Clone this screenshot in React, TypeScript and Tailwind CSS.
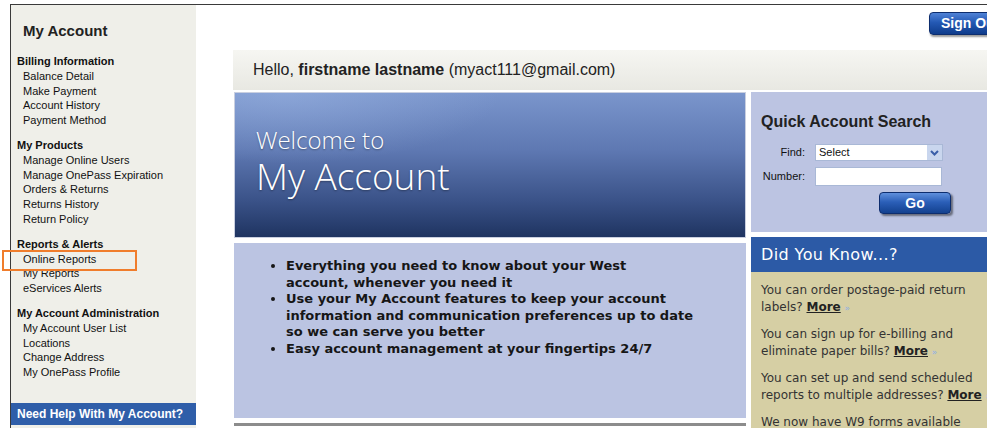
import React from "react";

const sections: { title: string; items: string[] }[] = [
  {
    title: "Billing Information",
    items: ["Balance Detail", "Make Payment", "Account History", "Payment Method"],
  },
  {
    title: "My Products",
    items: [
      "Manage Online Users",
      "Manage OnePass Expiration",
      "Orders & Returns",
      "Returns History",
      "Return Policy",
    ],
  },
  {
    title: "Reports & Alerts",
    items: ["Online Reports", "My Reports", "eServices Alerts"],
  },
  {
    title: "My Account Administration",
    items: ["My Account User List", "Locations", "Change Address", "My OnePass Profile"],
  },
];

const bullets: string[][] = [
  ["Everything you need to know about your West", "account, whenever you need it"],
  [
    "Use your My Account features to keep your account",
    "information and communication preferences up to date",
    "so we can serve you better",
  ],
  ["Easy account management at your fingertips 24/7"],
];

const tips: string[][] = [
  ["You can order postage-paid return", "labels?"],
  ["You can sign up for e-billing and", "eliminate paper bills?"],
  ["You can set up and send scheduled", "reports to multiple addresses?"],
];

function Sidebar() {
  return (
    <aside className="w-[185px] shrink-0 bg-[#efefe9] flex flex-col">
      <div className="flex-1 pt-[17px]">
        <h1 className="pl-[12px] text-[15px] leading-[17px] font-bold text-[#222]">My Account</h1>
        <div className="mt-[15px] flex flex-col gap-[10.25px]">
          {sections.map((s) => (
            <div key={s.title} className="text-[11px] leading-[14.75px] text-[#111]">
              <div className="pl-[6px] font-bold">{s.title}</div>
              <ul className="pl-[12px]">
                {s.items.map((it) => (
                  <li key={it}>{it}</li>
                ))}
              </ul>
            </div>
          ))}
        </div>
      </div>
      <div className="h-[22px] mb-[3px] bg-[#2f5ea9] flex items-center pl-[6px] text-[12px] font-bold text-white">
        Need Help With My Account?
      </div>
    </aside>
  );
}

function WelcomeBanner() {
  return (
    <div className="relative h-[146px] border border-[#c9cfe0] overflow-hidden bg-[linear-gradient(180deg,#7a95cc_0%,#5e78b2_40%,#3a5288_75%,#1f3461_100%)]">
      <div className="absolute inset-0 bg-[radial-gradient(ellipse_60%_70%_at_10%_0%,rgba(160,185,230,0.45),rgba(160,185,230,0)_70%)]" />
      <div className="relative pl-[21px] pt-[33px] text-white font-['Open_Sans',sans-serif] [text-shadow:0_1px_2px_rgba(0,0,0,0.35)]">
        <div className="text-[24px] leading-[28px] font-light">Welcome to</div>
        <div className="text-[37px] leading-[44px] font-light">My Account</div>
      </div>
    </div>
  );
}

function BulletPanel() {
  return (
    <div className="h-[175px] bg-[#bbc4e2] pt-[15px] pl-[40px] font-['DejaVu_Sans',sans-serif]">
      <ul className="list-disc pl-[12px] text-[13px] leading-[16.6px] font-bold text-[#161616]">
        {bullets.map((lines) => (
          <li key={lines[0]} className="whitespace-nowrap">
            {lines.map((l, i) => (
              <React.Fragment key={l}>
                {i > 0 && <br />}
                {l}
              </React.Fragment>
            ))}
          </li>
        ))}
      </ul>
    </div>
  );
}

function QuickSearch() {
  return (
    <div className="h-[140px] bg-[#bcc4e2] pl-[10px] pt-[20px]">
      <h2 className="text-[16px] leading-[20px] font-bold text-[#222]">Quick Account Search</h2>
      <div className="mt-[12px] flex flex-col gap-[6px] text-[11px] text-[#111]">
        <div className="flex items-center">
          <span className="w-[44px] text-right">Find:</span>
          <div className="ml-[10px] w-[128px] h-[17px] bg-white border border-[#a9b8d6] flex items-center justify-between">
            <span className="pl-[3px] text-[11px]">Select</span>
            <span className="w-[15px] h-[15px] bg-[#c9d6ee] flex items-center justify-center">
              <svg width="9" height="6" viewBox="0 0 9 6">
                <path d="M1 1 L4.5 4.5 L8 1" fill="none" stroke="#3a5ea8" strokeWidth="2" />
              </svg>
            </span>
          </div>
        </div>
        <div className="flex items-center">
          <span className="w-[44px] text-right">Number:</span>
          <div className="ml-[10px] w-[127px] h-[19px] bg-white border border-[#a9b8d6]" />
        </div>
      </div>
      <div className="mt-[6px] ml-[118px] w-[72px] h-[22px] rounded-[4px] border border-[#0d2d6e] bg-[linear-gradient(180deg,#5f8fdc_0%,#2b5fb8_45%,#13418f_100%)] shadow-[2px_2px_2px_rgba(0,0,0,0.45)] flex items-center justify-center text-white text-[14px] font-bold">
        Go
      </div>
    </div>
  );
}

function DidYouKnow() {
  return (
    <div className="font-['DejaVu_Sans',sans-serif]">
      <div className="h-[35px] bg-[#2c5aa6] flex items-center pl-[10px] text-white text-[16px] tracking-[0.4px]">
        Did You Know...?
      </div>
      <div className="bg-[#d6cfa4] pl-[10px] pt-[10px] text-[12px] leading-[17px] text-[#333] pb-[20px]">
        {tips.map((t) => (
          <p key={t[0]} className="mb-[9px] whitespace-nowrap">
            {t[0]}
            <br />
            {t[1]} <span className="font-bold underline text-[#222]">More</span>{" "}
            <span className="text-[9px] text-[#8fb0e6]">»</span>
          </p>
        ))}
        <p>We now have W9 forms available</p>
      </div>
    </div>
  );
}

export default function App() {
  return (
    <div className="relative w-[987px] h-[428px] overflow-hidden bg-white font-['Liberation_Sans',Arial,sans-serif]">
      <div className="ml-[10px] mt-[4px] h-[424px] border-t border-l border-[#3a3a3a] flex">
        <Sidebar />
        <main className="flex-1 min-w-0 pl-[37px]">
          <div className="h-[45px] flex justify-end">
            <div className="-mr-[22px] mt-[7px] w-[80px] h-[23px] rounded-[4px] border border-[#0d2d6e] bg-[linear-gradient(180deg,#4f82d6_0%,#2459b4_45%,#0f3c8b_100%)] shadow-[1px_2px_2px_rgba(0,0,0,0.4)] flex items-center pl-[11px] text-white text-[14px] font-bold">
              Sign Out
            </div>
          </div>
          <div className="h-[40px] bg-[linear-gradient(180deg,#f6f6f2_0%,#e8e8e2_100%)] flex items-center pl-[20px] text-[16px] text-[#222]">
            Hello,&nbsp;<b>firstname lastname</b>&nbsp;(myact111@gmail.com)
          </div>
          <div className="mt-[2px] flex gap-[5px]">
            <div className="w-[512px] ml-[1px] shrink-0 flex flex-col">
              <WelcomeBanner />
              <div className="mt-[5px]">
                <BulletPanel />
              </div>
              <div className="mt-[5px] h-[3px] bg-[#8c8c8c]" />
            </div>
            <div className="flex-1 min-w-0 flex flex-col">
              <QuickSearch />
              <div className="mt-[5px]">
                <DidYouKnow />
              </div>
            </div>
          </div>
        </main>
      </div>
      {/* highlight around the Online Reports link */}
      <div className="absolute left-[2px] top-[250px] w-[135px] h-[21px] border-2 border-[#f07d2c]" />
    </div>
  );
}
